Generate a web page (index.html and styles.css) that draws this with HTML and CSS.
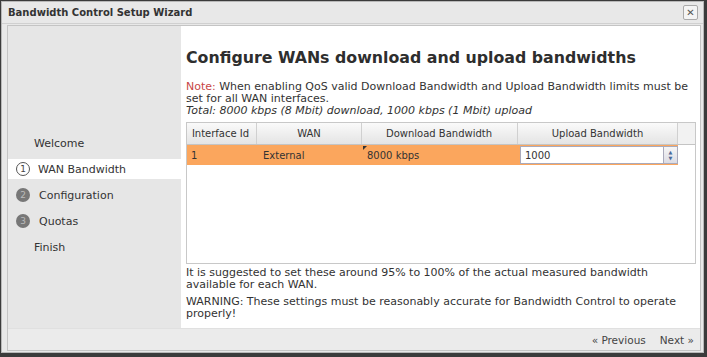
FILE: index.html
```html
<!DOCTYPE html>
<html lang="en">
<head>
    <meta charset="UTF-8">
    <title>Bandwidth Control Setup Wizard</title>
    <link rel="stylesheet" href="styles.css">
</head>
<body>
    <div id="win">
        <div id="titlebar">
            <span class="title">Bandwidth Control Setup Wizard</span>
            <span class="close">&#x2715;</span>
        </div>
        <div id="frame">
            <div id="body">
                <div id="nav">
                    <div class="step"><span class="num blank"></span>Welcome</div>
                    <div class="step on"><span class="num cur">1</span>WAN Bandwidth</div>
                    <div class="step"><span class="num">2</span>Configuration</div>
                    <div class="step"><span class="num">3</span>Quotas</div>
                    <div class="step"><span class="num blank"></span>Finish</div>
                </div>
                <div id="main">
                    <h1>Configure WANs download and upload bandwidths</h1>
                    <p class="note"><span class="red">Note:</span> When enabling QoS valid Download Bandwidth and Upload Bandwidth limits must be<br>set for all WAN interfaces.<br><i>Total: 8000 kbps (8 Mbit) download, 1000 kbps (1 Mbit) upload</i></p>
                    <div id="grid">
                        <div class="ghead">
                            <div class="c c1">Interface Id</div>
                            <div class="c c2">WAN</div>
                            <div class="c c3">Download Bandwidth</div>
                            <div class="c c4">Upload Bandwidth</div>
                            <div class="c c5"></div>
                        </div>
                        <div class="grow">
                            <div class="c c1 left">1</div>
                            <div class="c c2 left">External</div>
                            <div class="c c3 left dirty">8000 kbps</div>
                            <div class="c c4 edit">
                                <div class="input">1000</div>
                                <div class="spin"><span>&#9650;</span><span>&#9660;</span></div>
                            </div>
                        </div>
                    </div>
                    <p class="txt">It is suggested to set these around 95% to 100% of the actual measured bandwidth available for each WAN.</p>
                    <p class="txt">WARNING: These settings must be reasonably accurate for Bandwidth Control to operate properly!</p>
                </div>
            </div>
            <div id="footer">
                <span class="btn">&laquo; Previous</span>
                <span class="btn">Next &raquo;</span>
            </div>
        </div>
    </div>
</body>
</html>
```

FILE: styles.css
```css
* {
    margin: 0;
    padding: 0;
    box-sizing: border-box;
}
body {
    width: 707px;
    height: 357px;
    background: #3b3b3b;
    padding: 1px 3px 4px 1px;
    font-family: "DejaVu Sans", sans-serif;
    font-size: 11px;
    color: #333;
}

#win {
    width: 703px;
    height: 352px;
    background: #e8e8e8;
    border: 1px solid #b8b8b8;
    display: flex;
    flex-direction: column;
}

#titlebar {
    height: 22px;
    display: flex;
    align-items: center;
    justify-content: space-between;
    padding: 0 5px 0 6px;
    border-bottom: 1px solid #d0d0d0;
}
#titlebar .title {
    font-weight: bold;
    font-size: 10px;
    color: #333;
}
#titlebar .close {
    width: 15px;
    height: 15px;
    border: 1px solid #aaa;
    border-radius: 2px;
    background: #f4f4f4;
    font-size: 10px;
    font-weight: bold;
    line-height: 13px;
    text-align: center;
    color: #555;
}

#frame {
    flex: 1;
    margin: 1px 2px 1px 5px;
    border: 1px solid #c4c4c4;
    display: flex;
    flex-direction: column;
}

#body {
    flex: 1;
    display: flex;
}

#nav {
    width: 178px;
    background: #e6e6e6;
    padding-top: 104px;
}
.step {
    height: 26px;
    display: flex;
    align-items: center;
    padding-left: 8px;
    font-size: 11px;
    color: #333;
}
.step.on {
    background: #fff;
    height: 20px;
    margin: 3px 0;
}
.num {
    width: 14px;
    height: 14px;
    border-radius: 50%;
    background: #777;
    color: #bbb;
    font-size: 9px;
    line-height: 14px;
    text-align: center;
    margin-right: 9px;
    flex: none;
}
.num.cur {
    background: #fff;
    border: 1px solid #555;
    color: #444;
    line-height: 12px;
    margin-right: 8px;
}
.num.blank {
    background: none;
    width: 12px;
    margin-right: 6px;
}

#main {
    flex: 1;
    background: #fff;
    padding: 22px 4px 0 5px;
}
h1 {
    font-size: 15.8px;
    font-weight: bold;
    color: #2e2e2e;
    margin-bottom: 14px;
}
.note {
    line-height: 12px;
    margin-bottom: 5px;
    white-space: nowrap;
}
.red {
    color: #c84646;
}

#grid {
    width: 510px;
    height: 142px;
    border: 1px solid #c8c8c8;
    margin-bottom: 3px;
    font-size: 10px;
}
.ghead {
    display: flex;
    height: 22px;
    background: linear-gradient(#fafafa, #e4e4e4);
    border-bottom: 1px solid #c4c4c4;
}
.c {
    display: flex;
    align-items: center;
    justify-content: center;
    border-right: 1px solid #d0d0d0;
    padding: 0 6px;
    white-space: nowrap;
}
.c1 { width: 70px; padding-left: 4px; }
.c2 { width: 105px; }
.c3 { width: 156px; padding-left: 5px; }
.c4 { width: 160px; }
.c5 { flex: 1; border-right: none; background: #f2f2f2; }

.grow {
    display: flex;
    width: 491px;
    height: 20px;
    background: #fba65d;
}
.grow .c {
    border-right: none;
}
.grow .left {
    justify-content: flex-start;
}
.dirty {
    position: relative;
}
.dirty::before {
    content: "";
    position: absolute;
    left: 1px;
    top: 1px;
    border-top: 4px solid #333;
    border-right: 4px solid transparent;
}
.grow .edit {
    padding: 1px 0 1px 2px;
    align-items: stretch;
    justify-content: flex-start;
}
.input {
    flex: 1;
    background: #fff;
    border: 1px solid #aab;
    border-right: none;
    padding: 2px 4px;
    line-height: 14px;
}
.spin {
    width: 15px;
    background: linear-gradient(#f6f6f6, #dcdce4);
    border: 1px solid #aab;
    display: flex;
    flex-direction: column;
    align-items: center;
    justify-content: center;
    font-size: 5px;
    line-height: 6px;
    color: #4a6a9a;
}

.txt {
    line-height: 12px;
    margin-bottom: 5px;
}

#footer {
    height: 22px;
    background: #ebebeb;
    border-top: 1px solid #e0e0e0;
    display: flex;
    justify-content: flex-end;
    align-items: center;
    gap: 14px;
    padding-right: 6px;
}
.btn {
    font-size: 10.5px;
    color: #444;
}
```
